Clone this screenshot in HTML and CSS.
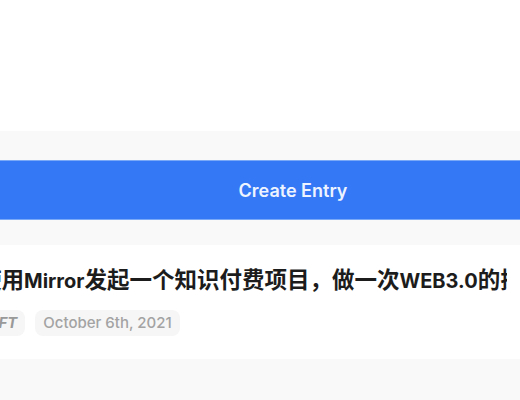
FILE: index.html
```html
<!DOCTYPE html>
<html lang="zh-CN">
<head>
  <meta charset="UTF-8">
  <meta name="viewport" content="width=device-width, initial-scale=1.0">
  <link rel="stylesheet" href="styles.css">
  <title>Entries</title>
</head>
<body>
  <header class="top"></header>
  <main class="feed">
    <div class="column">
      <button class="create-button" type="button">Create Entry</button>
      <article class="entry">
        <h2 class="entry-title">使用<span class="en">Mirror</span>发起一个知识付费项目，做一次<span class="en">WEB3.0</span>的探索</h2>
        <div class="entry-meta">
          <span class="pill pill-tag">NFT</span>
          <span class="pill pill-date">October 6th, 2021</span>
        </div>
      </article>
    </div>
  </main>
</body>
</html>
```

FILE: styles.css
```css
body {
  margin: 0;
  font-family: Inter, "Noto Sans CJK SC", sans-serif;
  background-color: #f9f9f9;
  overflow: hidden;
}

.top {
  height: 131px;
  background-color: #ffffff;
}

.feed {
  padding-top: 29px;
}

.column {
  width: 700px;
  margin-left: -57px;
  display: flex;
  flex-direction: column;
  gap: 25px;
}

.create-button {
  height: 60px;
  border: 1px solid #7aa9f7;
  background-color: #3478f5;
  color: #eef4ff;
  font-family: Inter, sans-serif;
  font-size: 18px;
  font-weight: 600;
  cursor: pointer;
}

.entry {
  background-color: #ffffff;
  padding: 20px 32px 23px 36px;
}

.entry-title {
  margin: 0;
  max-width: 528px;
  overflow: hidden;
  font-size: 22.5px;
  line-height: 30px;
  font-weight: 700;
  color: #1c1c1c;
  white-space: nowrap;
}

.entry-title .en {
  font-size: 20px;
}

.entry-meta {
  margin-top: 14px;
  display: flex;
  gap: 10px;
}

.pill {
  display: inline-block;
  padding: 0 8px;
  height: 26px;
  line-height: 26px;
  border-radius: 8px;
  background-color: #f6f6f6;
  font-size: 15px;
  font-weight: 500;
  color: #a3a3a3;
}

.pill-tag {
  font-style: italic;
  font-weight: 700;
  color: #999;
}
```
